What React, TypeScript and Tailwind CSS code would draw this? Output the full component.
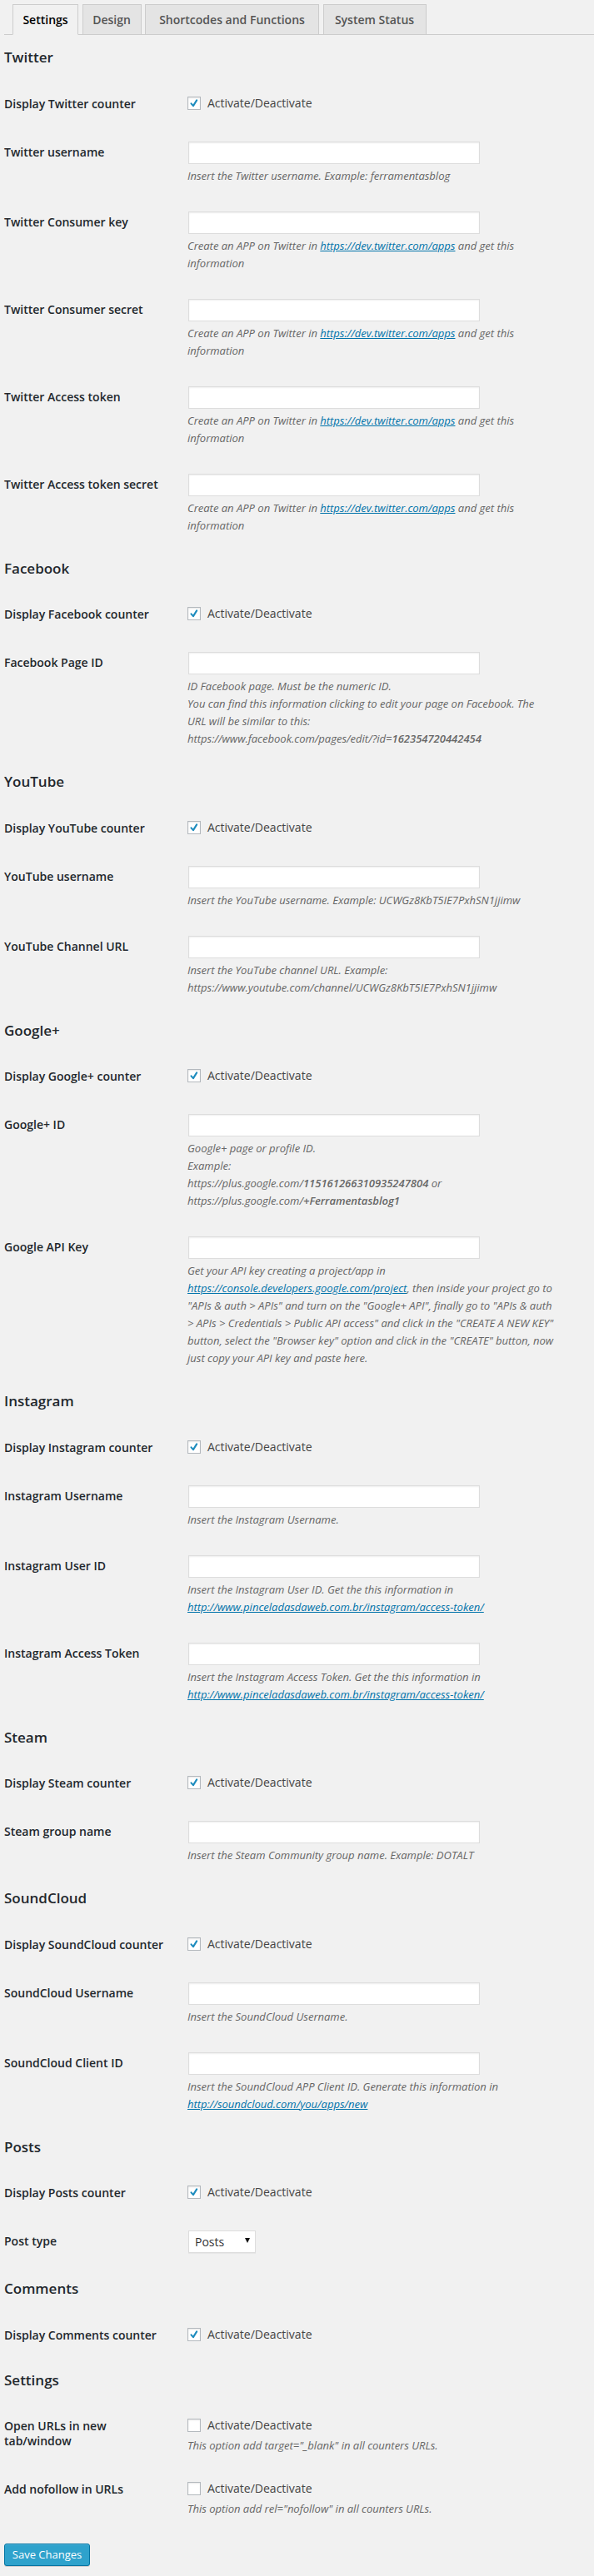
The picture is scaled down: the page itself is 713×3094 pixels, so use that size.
import React from "react";

type Line = React.ReactNode;

type Field =
  | { kind: "check"; label: string; checked: boolean; desc?: Line }
  | { kind: "text"; label: string; desc: Line[] }
  | { kind: "select"; label: string; value: string };

type Section = { title: string; fields: Field[] };

const A = ({ children }: { children: React.ReactNode }) => (
  <a className="text-[#0073aa] underline">{children}</a>
);

const twitterApp: Line[] = [
  <>
    Create an APP on Twitter in <A>https://dev.twitter.com/apps</A> and get this
  </>,
  "information",
];

const instaLink = <A>http://www.pinceladasdaweb.com.br/instagram/access-token/</A>;

const sections: Section[] = [
  {
    title: "Twitter",
    fields: [
      { kind: "check", label: "Display Twitter counter", checked: true },
      { kind: "text", label: "Twitter username", desc: ["Insert the Twitter username. Example: ferramentasblog"] },
      { kind: "text", label: "Twitter Consumer key", desc: twitterApp },
      { kind: "text", label: "Twitter Consumer secret", desc: twitterApp },
      { kind: "text", label: "Twitter Access token", desc: twitterApp },
      { kind: "text", label: "Twitter Access token secret", desc: twitterApp },
    ],
  },
  {
    title: "Facebook",
    fields: [
      { kind: "check", label: "Display Facebook counter", checked: true },
      {
        kind: "text",
        label: "Facebook Page ID",
        desc: [
          "ID Facebook page. Must be the numeric ID.",
          "You can find this information clicking to edit your page on Facebook. The",
          "URL will be similar to this:",
          <>
            https://www.facebook.com/pages/edit/?id=<b className="font-semibold">162354720442454</b>
          </>,
        ],
      },
    ],
  },
  {
    title: "YouTube",
    fields: [
      { kind: "check", label: "Display YouTube counter", checked: true },
      { kind: "text", label: "YouTube username", desc: ["Insert the YouTube username. Example: UCWGz8KbT5IE7PxhSN1jjimw"] },
      {
        kind: "text",
        label: "YouTube Channel URL",
        desc: ["Insert the YouTube channel URL. Example:", "https://www.youtube.com/channel/UCWGz8KbT5IE7PxhSN1jjimw"],
      },
    ],
  },
  {
    title: "Google+",
    fields: [
      { kind: "check", label: "Display Google+ counter", checked: true },
      {
        kind: "text",
        label: "Google+ ID",
        desc: [
          "Google+ page or profile ID.",
          "Example:",
          <>
            https://plus.google.com/<b className="font-semibold">115161266310935247804</b> or
          </>,
          <>
            https://plus.google.com/<b className="font-semibold">+Ferramentasblog1</b>
          </>,
        ],
      },
      {
        kind: "text",
        label: "Google API Key",
        desc: [
          "Get your API key creating a project/app in",
          <>
            <A>https://console.developers.google.com/project</A>, then inside your project go to
          </>,
          '"APIs & auth > APIs" and turn on the "Google+ API", finally go to "APIs & auth',
          '> APIs > Credentials > Public API access" and click in the "CREATE A NEW KEY"',
          'button, select the "Browser key" option and click in the "CREATE" button, now',
          "just copy your API key and paste here.",
        ],
      },
    ],
  },
  {
    title: "Instagram",
    fields: [
      { kind: "check", label: "Display Instagram counter", checked: true },
      { kind: "text", label: "Instagram Username", desc: ["Insert the Instagram Username."] },
      { kind: "text", label: "Instagram User ID", desc: ["Insert the Instagram User ID. Get the this information in", instaLink] },
      {
        kind: "text",
        label: "Instagram Access Token",
        desc: ["Insert the Instagram Access Token. Get the this information in", instaLink],
      },
    ],
  },
  {
    title: "Steam",
    fields: [
      { kind: "check", label: "Display Steam counter", checked: true },
      { kind: "text", label: "Steam group name", desc: ["Insert the Steam Community group name. Example: DOTALT"] },
    ],
  },
  {
    title: "SoundCloud",
    fields: [
      { kind: "check", label: "Display SoundCloud counter", checked: true },
      { kind: "text", label: "SoundCloud Username", desc: ["Insert the SoundCloud Username."] },
      {
        kind: "text",
        label: "SoundCloud Client ID",
        desc: ["Insert the SoundCloud APP Client ID. Generate this information in", <A>http://soundcloud.com/you/apps/new</A>],
      },
    ],
  },
  {
    title: "Posts",
    fields: [
      { kind: "check", label: "Display Posts counter", checked: true },
      { kind: "select", label: "Post type", value: "Posts" },
    ],
  },
  {
    title: "Comments",
    fields: [{ kind: "check", label: "Display Comments counter", checked: true }],
  },
  {
    title: "Settings",
    fields: [
      {
        kind: "check",
        label: "Open URLs in new tab/window",
        checked: false,
        desc: 'This option add target="_blank" in all counters URLs.',
      },
      {
        kind: "check",
        label: "Add nofollow in URLs",
        checked: false,
        desc: 'This option add rel="nofollow" in all counters URLs.',
      },
    ],
  },
];

const tabs = [
  { label: "Settings", w: "w-[79px]", active: true },
  { label: "Design", w: "w-[71px]", active: false },
  { label: "Shortcodes and Functions", w: "w-[209px]", active: false },
  { label: "System Status", w: "w-[124px]", active: false },
];

function Checkbox({ checked }: { checked: boolean }) {
  return (
    <span className="mt-[4px] flex h-[16px] w-[16px] shrink-0 items-center justify-center border border-[#b4b9be] bg-white shadow-[inset_0_1px_2px_rgba(0,0,0,0.1)]">
      {checked && (
        <svg viewBox="0 0 16 16" className="h-[16px] w-[16px]">
          <path d="M4 8.4 L6.8 11.6 L11.6 3.8" fill="none" stroke="#1e8cbe" strokeWidth="2.4" strokeLinecap="round" strokeLinejoin="round" />
        </svg>
      )}
    </span>
  );
}

function Desc({ lines }: { lines: Line[] }) {
  return (
    <div className="mt-[4px] text-[13px] italic leading-[21px] text-[#666]">
      {lines.map((l, i) => (
        <div key={i} className="whitespace-nowrap">
          {l}
        </div>
      ))}
    </div>
  );
}

function Row({ field }: { field: Field }) {
  let pb = "pb-[16px]";
  if (field.kind === "select") pb = "pb-[18px]";
  if (field.kind === "check") pb = field.desc ? "pb-[13px]" : "pb-[18px]";
  return (
    <div className={`flex pt-[16px] ${pb}`}>
      <div className="w-[200px] shrink-0 pt-[4px] text-[14px] font-semibold leading-[18px] text-[#23282d]">
        {field.label}
      </div>
      <div className="ml-[20px] min-w-0 flex-1">
        {field.kind === "check" && (
          <>
            <label className="flex h-[24px] items-start gap-[8px] text-[14px] leading-[24px] text-[#444]">
              <Checkbox checked={field.checked} />
              <span>Activate/Deactivate</span>
            </label>
            {field.desc && (
              <div className="mt-[2px] text-[13px] italic leading-[21px] text-[#666]">{field.desc}</div>
            )}
          </>
        )}
        {field.kind === "text" && (
          <>
            <input
              type="text"
              className="ml-px block h-[27px] w-[350px] border border-[#ddd] bg-white px-1 shadow-[inset_0_1px_2px_rgba(0,0,0,0.07)] outline-none"
            />
            <Desc lines={field.desc} />
          </>
        )}
        {field.kind === "select" && (
          <div className="ml-px flex h-[27px] w-[81px] items-center justify-between border border-[#ddd] bg-white pl-[7px] pr-[6px] text-[14px] text-[#333] shadow-[0_1px_1px_rgba(0,0,0,0.04)]">
            <span>{field.value}</span>
            <svg viewBox="0 0 6 6" className="mb-[3px] h-[6px] w-[6px]">
              <path d="M0 0 H6 L3 6 Z" fill="#111" />
            </svg>
          </div>
        )}
      </div>
    </div>
  );
}

export default function App() {
  return (
    <div className="min-h-screen bg-[#f1f1f1] pl-[5px] pt-[5px] font-['Open_Sans','Noto_Sans',sans-serif] text-[#444]">
      <div className="flex gap-[4.5px] border-b border-[#ccc] pl-[10px]">
        {tabs.map((t) => (
          <div
            key={t.label}
            className={`-mb-px flex h-[37px] shrink-0 items-center justify-center border border-[#ccc] text-[14px] font-semibold ${t.w} ${
              t.active ? "border-b-[#f1f1f1] bg-[#f1f1f1] text-[#000]" : "bg-[#e4e4e4] text-[#555]"
            }`}
          >
            {t.label}
          </div>
        ))}
      </div>

      <div className="pt-[1px]">
        {sections.map((s, i) => (
          <div key={s.title}>
            <h3
              className={`${i === 0 ? "mt-[15px]" : "mt-[14px]"} mb-[15.5px] text-[17px] font-semibold leading-[22px] text-[#23282d]`}
            >
              {s.title}
            </h3>
            {s.fields.map((f, j) => (
              <Row key={j} field={f} />
            ))}
          </div>
        ))}
      </div>

      <div className="pt-[18px] pb-[7px]">
        <button className="h-[27px] w-[103px] rounded-[3px] border border-[#0074a2] bg-[#2ea2cc] text-[13px] text-white shadow-[inset_0_1px_0_rgba(120,200,230,0.5),0_1px_0_rgba(0,0,0,0.15)]">
          Save Changes
        </button>
      </div>
    </div>
  );
}
